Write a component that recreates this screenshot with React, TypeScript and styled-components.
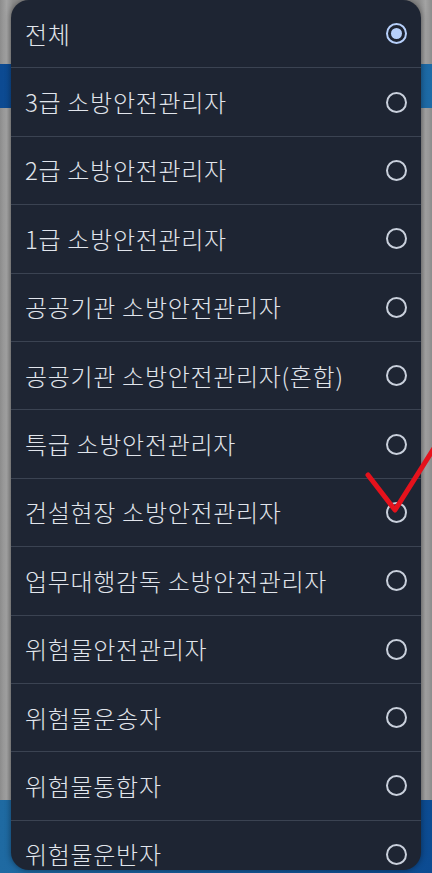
import React from 'react'
import styled, { createGlobalStyle } from 'styled-components'

const options = [
  '전체',
  '3급 소방안전관리자',
  '2급 소방안전관리자',
  '1급 소방안전관리자',
  '공공기관 소방안전관리자',
  '공공기관 소방안전관리자(혼합)',
  '특급 소방안전관리자',
  '건설현장 소방안전관리자',
  '업무대행감독 소방안전관리자',
  '위험물안전관리자',
  '위험물운송자',
  '위험물통합자',
  '위험물운반자',
]

const GlobalStyle = createGlobalStyle`
  html, body {
    margin: 0;
    padding: 0;
    width: 432px;
    height: 873px;
    overflow: hidden;
    font-family: "Noto Sans CJK KR", "Noto Sans", sans-serif;
  }
`

export default function App() {
  const [selected, setSelected] = React.useState(0)
  return (
    <>
      <GlobalStyle />
      <Screen>
        <Backdrop>
          <Gray $h={64} />
          <Band $h={44} />
          <Gray $h={692} />
          <BottomBand />
        </Backdrop>
        <Dialog>
          {options.map((label, i) => (
            <Row key={label} onClick={() => setSelected(i)}>
              <Label>{label}</Label>
              <Radio $checked={selected === i}>{selected === i && <Dot />}</Radio>
            </Row>
          ))}
        </Dialog>
        <Mark viewBox="0 0 432 873">
          <path d="M368 475 L395 510 L436 445" />
        </Mark>
      </Screen>
    </>
  )
}

const Screen = styled.div`
  position: relative;
  width: 432px;
  height: 873px;
  overflow: hidden;
`
const Backdrop = styled.div`
  display: flex;
  flex-direction: column;
  height: 100%;
`
const Gray = styled.div<{ $h: number }>`
  flex: 0 0 ${p => p.$h}px;
  background: linear-gradient(90deg, #8c8c8c 0%, #a3a3a3 1.5%, #8d8d8d 3%, #8d8d8d 97%, #a3a3a3 98.5%, #8c8c8c 100%);
`
const Band = styled.div<{ $h: number }>`
  flex: 0 0 ${p => p.$h}px;
  background: linear-gradient(90deg, #0c4a92 0%, #1d6aa6 100%);
`
const BottomBand = styled.div`
  flex: 1;
  background: linear-gradient(90deg, #1f6aa2 0%, #0c4b92 100%);
`
const Dialog = styled.div`
  position: absolute;
  top: 0;
  left: 11px;
  width: 410px;
  height: 870px;
  overflow: hidden;
  border-radius: 18px;
  background: #1e2533;
  box-shadow: 0 0 6px rgba(0, 0, 0, 0.45);
`
const Row = styled.div`
  box-sizing: border-box;
  display: flex;
  align-items: center;
  justify-content: space-between;
  height: 68.4px;
  padding: 0 14px;
  border-bottom: 1px solid #3b4352;
  cursor: pointer;
`
const Label = styled.span`
  color: #e1e5ec;
  font-size: 24px;
  font-weight: 300;
  letter-spacing: 0.7px;
  line-height: 1;
`
const Radio = styled.span<{ $checked: boolean }>`
  box-sizing: border-box;
  display: flex;
  align-items: center;
  justify-content: center;
  flex: 0 0 21px;
  width: 21px;
  height: 21px;
  border-radius: 50%;
  border: 2px solid ${p => (p.$checked ? '#b7d0fb' : '#c9d0dc')};
`
const Dot = styled.span`
  width: 11px;
  height: 11px;
  border-radius: 50%;
  background: #b7d0fb;
`
const Mark = styled.svg`
  position: absolute;
  top: 0;
  left: 0;
  width: 432px;
  height: 873px;
  pointer-events: none;
  path {
    fill: none;
    stroke: #e5121c;
    stroke-width: 5;
    stroke-linecap: round;
    stroke-linejoin: round;
  }
`
